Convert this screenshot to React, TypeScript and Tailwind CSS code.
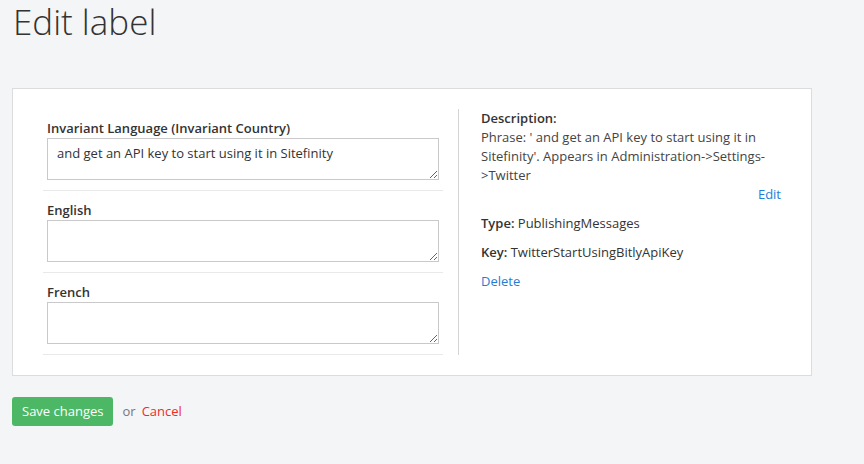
import React from "react";

const languages = [
  { name: "Invariant Language (Invariant Country)", value: "and get an API key to start using it in Sitefinity" },
  { name: "English", value: "" },
  { name: "French", value: "" },
];

export default function App() {
  return (
    <div
      className="min-h-screen bg-[#f4f5f7] pl-3 text-[13px] text-[#333]"
      style={{ fontFamily: '"Open Sans", "Noto Sans", sans-serif' }}
    >
      <h1 className="text-[35px] leading-[44px] font-light text-[#333] pl-px mb-[44px]">Edit label</h1>

      {/* Card */}
      <div className="w-[800px] bg-white border border-[#dcdcdc] px-[30px] py-5 flex">
        {/* Left side */}
        <div className="w-[400px] mr-[15px]">
          {languages.map((lang) => (
            <div key={lang.name} className="px-1 py-[10px] border-b border-[#e9e9e9]">
              <label className="block font-semibold leading-[18px] mb-px">{lang.name}</label>
              <textarea
                defaultValue={lang.value}
                className="block w-full h-[42px] border border-[#c9c9c9] bg-white px-[9px] py-[5px] leading-[18px] text-[13px] text-[#333] outline-none"
              />
            </div>
          ))}
        </div>

        {/* Right side */}
        <div className="w-[323px] border-l border-[#d4d4d4] pl-[22px] leading-[19px]">
          <div className="font-semibold">Description:</div>
          <div className="text-[#444]">
            Phrase: ' and get an API key to start using it in Sitefinity'. Appears in Administration-&gt;Settings-&gt;Twitter
          </div>
          <div className="text-right">
            <a className="text-[#1f7ed4] cursor-pointer">Edit</a>
          </div>
          <div className="mt-[10px]">
            <span className="font-semibold">Type:</span> PublishingMessages
          </div>
          <div className="mt-[10px]">
            <span className="font-semibold">Key:</span> TwitterStartUsingBitlyApiKey
          </div>
          <div className="mt-[10px]">
            <a className="text-[#1f7ed4] cursor-pointer">Delete</a>
          </div>
        </div>
      </div>

      {/* Actions */}
      <div className="mt-[21px] flex items-center">
        <button className="h-[29px] px-[10px] rounded-[3px] bg-[#4cb865] text-white text-[13px]">Save changes</button>
        <span className="ml-[9px] text-[#777]">or</span>
        <a className="ml-[6px] text-[#ee2b2b] cursor-pointer">Cancel</a>
      </div>
    </div>
  );
}
